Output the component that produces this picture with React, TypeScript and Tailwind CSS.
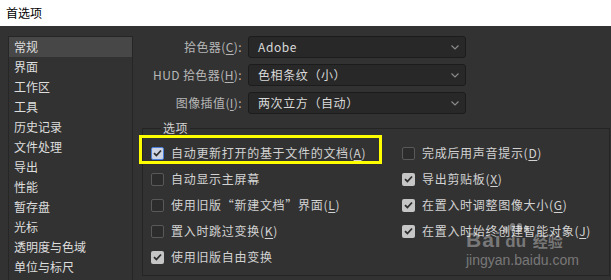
import React from "react";

const font = { fontFamily: '"Noto Sans CJK SC", "Noto Sans", sans-serif' };

const navItems = [
  "常规",
  "界面",
  "工作区",
  "工具",
  "历史记录",
  "文件处理",
  "导出",
  "性能",
  "暂存盘",
  "光标",
  "透明度与色域",
  "单位与标尺",
];

const Key = ({ k }: { k: string }) => (
  <>
    (<span className="underline underline-offset-2">{k}</span>)
  </>
);

const Chevron = () => (
  <svg width="8" height="5" viewBox="0 0 8 5" className="shrink-0">
    <path d="M0.5 0.5 L4 4 L7.5 0.5" fill="none" stroke="#8a8a8a" strokeWidth="1.2" />
  </svg>
);

const Select = ({ value }: { value: string }) => (
  <div className="flex items-center justify-between w-[218px] h-[22px] rounded-[3px] border border-[#1c1c1c] bg-[#282828] pl-[9px] pr-[6px] text-[12px] tracking-[0.6px] text-[#dadada]">
    <span>{value}</span>
    <Chevron />
  </div>
);

const Box = ({ checked, focus }: { checked?: boolean; focus?: boolean }) => {
  if (!checked)
    return <div className="w-[13px] h-[13px] shrink-0 rounded-[2px] border border-[#595959] bg-[#2c2c2c]" />;
  return (
    <div
      className={
        "w-[13px] h-[13px] shrink-0 rounded-[2px] flex items-center justify-center " +
        (focus ? "border border-[#4a7dd8] bg-[#cdd5e4]" : "bg-[#c6c6c6]")
      }
    >
      <svg width="9" height="8" viewBox="0 0 9 8">
        <path d="M1 4.2 L3.4 6.5 L8 1.5" fill="none" stroke="#2e2e2e" strokeWidth="1.8" />
      </svg>
    </div>
  );
};

const Option = ({
  checked,
  focus,
  children,
}: {
  checked?: boolean;
  focus?: boolean;
  children: React.ReactNode;
}) => (
  <div className="flex items-center gap-[7px] h-[26px] text-[12px] tracking-[0.7px] text-[#d2d2d2] whitespace-nowrap">
    <Box checked={checked} focus={focus} />
    <span>{children}</span>
  </div>
);

export default function App() {
  return (
    <div className="relative w-[611px] h-[280px] overflow-hidden bg-[#323232] flex flex-col" style={font}>
      <div className="h-[26px] bg-white flex items-center px-[6px] text-[12px] text-black">首选项</div>

      <div className="flex flex-1">
        <div className="ml-[8px] mt-[10px] w-[125px] border border-b-0 border-[#262626] flex flex-col">
          {navItems.map((n, i) => (
            <div
              key={n}
              className={
                "h-[20px] leading-[20px] pl-[5px] text-[12px] text-[#dedede] " +
                (i === 0 ? "bg-[#474747]" : "")
              }
            >
              {n}
            </div>
          ))}
        </div>

        <div className="flex-1 flex flex-col pt-[10px]">
          <div className="flex flex-col gap-[6px]">
            {[
              [<>拾色器<Key k="C" />:</>, "Adobe"],
              [<>HUD 拾色器<Key k="H" />:</>, "色相条纹（小）"],
              [<>图像插值<Key k="I" />:</>, "两次立方（自动）"],
            ].map(([label, value], i) => (
              <div key={i} className="flex items-center">
                <div className="w-[115px] pr-[6px] text-right text-[12px] tracking-[0.4px] text-[#b6b6b6] whitespace-nowrap">
                  {label}
                </div>
                <Select value={value as string} />
              </div>
            ))}
          </div>

          <fieldset className="ml-[9px] mr-[1px] mt-[5px] border border-[#242424] pl-[8px] pt-[3px] pb-[5px]">
            <legend className="ml-[10px] px-[2px] text-[12px] leading-[18px] tracking-[0.5px] text-[#d2d2d2]">选项</legend>
            <div className="grid grid-cols-[251px_1fr]">
              <div className="flex flex-col">
                <div className="relative">
                  <Option checked focus>
                    自动更新打开的基于文件的文档<Key k="A" />
                  </Option>
                  <div className="absolute left-[-12px] top-[-5px] w-[243px] h-[29px] border-[3px] border-[#ffff00]" />
                </div>
                <Option>自动显示主屏幕</Option>
                <Option>
                  使用旧版“新建文档”界面<Key k="L" />
                </Option>
                <Option>
                  置入时跳过变换<Key k="K" />
                </Option>
                <Option checked>使用旧版自由变换</Option>
              </div>
              <div className="flex flex-col">
                <Option>
                  完成后用声音提示<Key k="D" />
                </Option>
                <Option checked>
                  导出剪贴板<Key k="X" />
                </Option>
                <Option checked>
                  在置入时调整图像大小<Key k="G" />
                </Option>
                <Option checked>
                  在置入时始终创建智能对象<Key k="J" />
                </Option>
              </div>
            </div>
          </fieldset>
        </div>
      </div>

      {/* watermark */}
      <div className="absolute left-[466px] top-[214px] flex flex-col items-start text-white/35 pointer-events-none">
        <div className="relative flex items-end h-[36px]">
          <span className="text-[21px] font-bold leading-[20px] tracking-[1px]" style={{ fontFamily: '"Liberation Sans", sans-serif' }}>
            Bai
          </span>
          <div className="flex flex-col items-center ml-[1px]">
            <div className="flex gap-[2px] mb-[1px]">
              <div className="w-[5px] h-[7px] rounded-full bg-white/35" />
              <div className="w-[5px] h-[8px] rounded-full bg-white/35 -mt-[3px]" />
              <div className="w-[5px] h-[8px] rounded-full bg-white/35 -mt-[3px]" />
              <div className="w-[5px] h-[7px] rounded-full bg-white/35" />
            </div>
            <span className="text-[17px] font-bold leading-[16px]" style={{ fontFamily: '"Liberation Sans", sans-serif' }}>
              du
            </span>
          </div>
          <span className="ml-[4px] text-[15px] font-bold leading-[18px]">经验</span>
        </div>
        <span className="text-[14px] leading-[18px] mt-[1px]" style={{ fontFamily: '"Liberation Sans", sans-serif' }}>
          jingyan.baidu.com
        </span>
      </div>
    </div>
  );
}
